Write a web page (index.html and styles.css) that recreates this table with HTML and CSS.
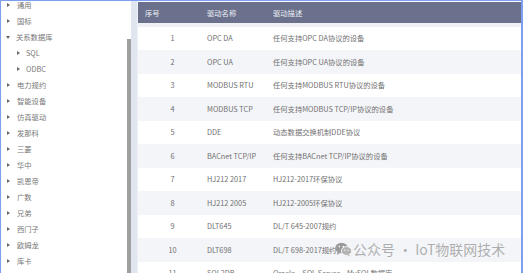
FILE: index.html
```html
<!DOCTYPE html>
<html>
<head>
<meta charset="utf-8">
<link rel="stylesheet" href="styles.css">
</head>
<body>
<div class="frame">
  <aside class="sidebar">
    <ul class="tree">
      <li class="node"><span class="caret"></span>通用</li>
      <li class="node"><span class="caret"></span>国标</li>
      <li class="node"><span class="caret open"></span>关系数据库</li>
      <li class="node sub"><span class="caret"></span>SQL</li>
      <li class="node sub"><span class="caret"></span>ODBC</li>
      <li class="node"><span class="caret"></span>电力规约</li>
      <li class="node"><span class="caret"></span>智能设备</li>
      <li class="node"><span class="caret"></span>仿真驱动</li>
      <li class="node"><span class="caret"></span>发那科</li>
      <li class="node"><span class="caret"></span>三菱</li>
      <li class="node"><span class="caret"></span>华中</li>
      <li class="node"><span class="caret"></span>凯恩帝</li>
      <li class="node"><span class="caret"></span>广数</li>
      <li class="node"><span class="caret"></span>兄弟</li>
      <li class="node"><span class="caret"></span>西门子</li>
      <li class="node"><span class="caret"></span>欧姆龙</li>
      <li class="node"><span class="caret"></span>库卡</li>
    </ul>
  </aside>
  <div class="scroll"><div class="thumb"></div></div>
  <div class="gutter"></div>
  <main class="main">
    <div class="thead">
      <div class="c1 h">序号</div>
      <div class="c2">驱动名称</div>
      <div class="c3">驱动描述</div>
    </div>
    <div class="band"></div>
    <div class="row"><div class="c1">1</div><div class="c2">OPC DA</div><div class="c3">任何支持OPC DA协议的设备</div></div>
    <div class="row alt"><div class="c1">2</div><div class="c2">OPC UA</div><div class="c3">任何支持OPC UA协议的设备</div></div>
    <div class="row"><div class="c1">3</div><div class="c2">MODBUS RTU</div><div class="c3">任何支持MODBUS RTU协议的设备</div></div>
    <div class="row alt"><div class="c1">4</div><div class="c2">MODBUS TCP</div><div class="c3">任何支持MODBUS TCP/IP协议的设备</div></div>
    <div class="row"><div class="c1">5</div><div class="c2">DDE</div><div class="c3">动态数据交换机制DDE协议</div></div>
    <div class="row alt"><div class="c1">6</div><div class="c2">BACnet TCP/IP</div><div class="c3">任何支持BACnet TCP/IP协议的设备</div></div>
    <div class="row"><div class="c1">7</div><div class="c2">HJ212 2017</div><div class="c3">HJ212-2017环保协议</div></div>
    <div class="row alt"><div class="c1">8</div><div class="c2">HJ212 2005</div><div class="c3">HJ212-2005环保协议</div></div>
    <div class="row"><div class="c1">9</div><div class="c2">DLT645</div><div class="c3">DL/T 645-2007规约</div></div>
    <div class="row alt"><div class="c1">10</div><div class="c2">DLT698</div><div class="c3">DL/T 698-2017规约</div></div>
    <div class="row"><div class="c1">11</div><div class="c2">SQL2DB</div><div class="c3">Oracle、SQL Server、MySQL数据库</div></div>
  </main>
  <div class="watermark">
    <svg class="wx" width="17" height="15" viewBox="0 0 17 15">
      <ellipse cx="6.5" cy="6" rx="6.3" ry="5.3" fill="#9a9a9a"/>
      <path d="M2.5 10 L1.8 13 L5 11 Z" fill="#9a9a9a"/>
      <ellipse cx="11.5" cy="9" rx="5.2" ry="4.4" fill="#b4b4b4" stroke="#fff" stroke-width="0.8"/>
      <path d="M14 12.5 L15.2 14.6 L12.3 13.2 Z" fill="#b4b4b4"/>
      <circle cx="4.3" cy="4.6" r="0.8" fill="#fff"/>
      <circle cx="8.3" cy="4.6" r="0.8" fill="#fff"/>
      <circle cx="9.8" cy="8.2" r="0.6" fill="#fff"/>
      <circle cx="13.2" cy="8.2" r="0.6" fill="#fff"/>
    </svg>
    <span class="wm-text">公众号 · IoT物联网技术</span>
  </div>
</div>
</body>
</html>
```
FILE: styles.css
```css
* { box-sizing: border-box; margin: 0; padding: 0; }
html, body { width: 523px; height: 273px; overflow: hidden; background: #fff; }
body {
  font-family: "Noto Sans CJK SC", "Liberation Sans", sans-serif;
  font-size: 7.3px;
  color: #707070;
}
.frame {
  position: relative;
  display: flex;
  width: 523px;
  height: 273px;
  border-top: 1px solid #7d9ff0;
  border-left: 1px solid #7d9ff0;
  border-right: 2px solid #7d9ff0;
  overflow: hidden;
}
.sidebar {
  width: 126px;
  flex: none;
  overflow: hidden;
  background: #fff;
}
.tree { list-style: none; margin-top: -4px; }
.node {
  height: 16px;
  line-height: 16px;
  display: flex;
  align-items: center;
  padding-left: 5px;
  white-space: nowrap;
  color: #777;
}
.node.sub { padding-left: 15px; }
.caret {
  width: 0; height: 0;
  border-left: 3px solid #666;
  border-top: 2px solid transparent;
  border-bottom: 2px solid transparent;
  margin-right: 7px;
  margin-left: 1px;
}
.caret.open {
  border-left: 2px solid transparent;
  border-right: 2px solid transparent;
  border-top: 3px solid #666;
  border-bottom: 0;
  margin-left: 0;
  margin-right: 6px;
}
.node.sub .caret { margin-right: 6px; }
.scroll {
  width: 4px;
  flex: none;
  background: #fff;
  padding-top: 38px;
}
.thumb { width: 4px; height: 100%; background: #a0a0a0; }
.gutter {
  width: 7px;
  flex: none;
  background: #e0e5f0;
  border-right: 1px solid #eef1f8;
}
.main {
  flex: 1;
  padding-top: 1px;
  background: #fff;
}
.thead {
  display: flex;
  height: 21px;
  align-items: center;
  background: #6b718c;
  color: #eceef4;
}
.band { height: 3.5px; background: #eff0f4; }
.row {
  display: flex;
  height: 23.5px;
  align-items: center;
  background: #fff;
  white-space: nowrap;
}
.row.alt { background: #f4f5f8; }
.c1 { width: 69px; flex: none; text-align: center; }
.c1.h { text-align: left; padding-left: 7px; }
.c2 { width: 66px; flex: none; }
.c3 { flex: 1; }
.watermark {
  position: absolute;
  left: 334px;
  top: 240px;
  display: flex;
  align-items: center;
  gap: 1px;
  white-space: nowrap;
}
.wx { display: block; }
.wm-text {
  font-size: 14px;
  color: rgba(150, 150, 150, 0.75);
  line-height: 17px;
}
```
